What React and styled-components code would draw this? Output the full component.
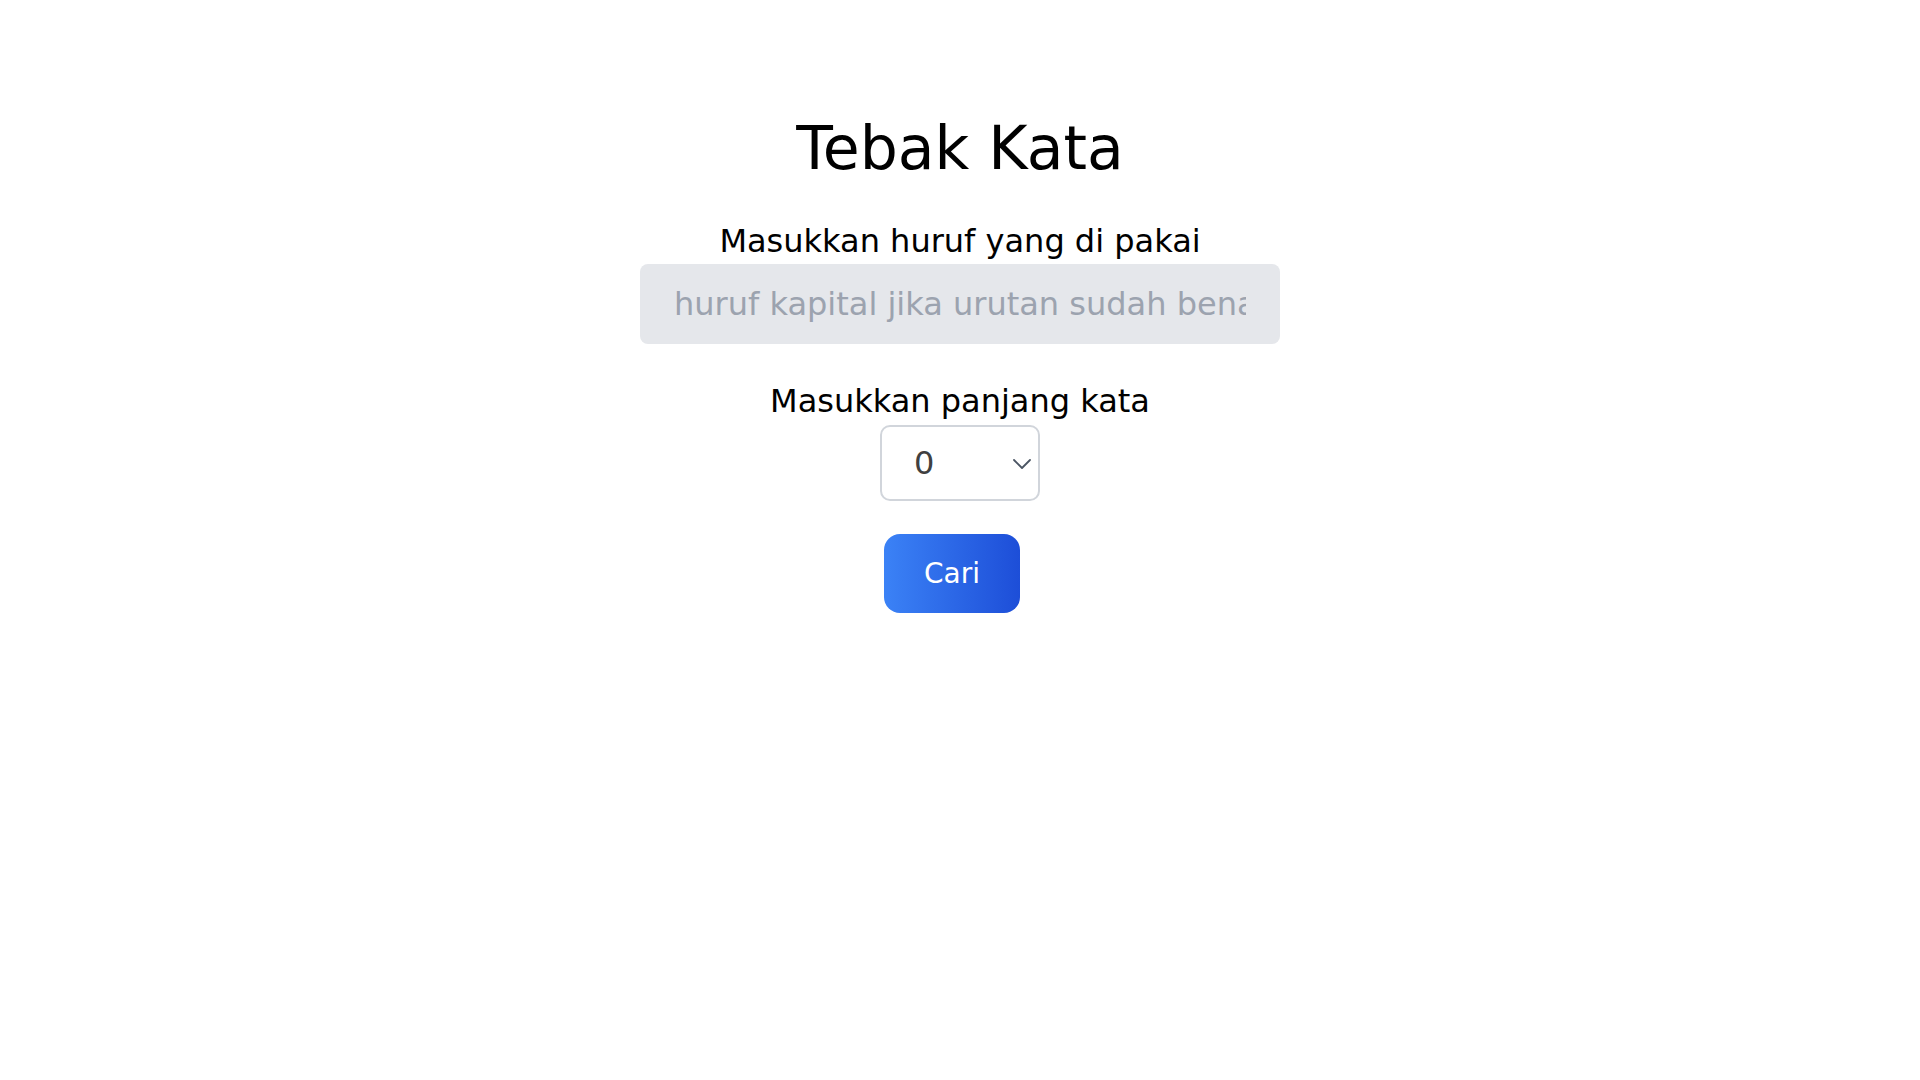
import styled, { createGlobalStyle } from 'styled-components';
import { useState } from 'react';

const GlobalStyle = createGlobalStyle`
  *, *::before, *::after {
    box-sizing: border-box;
  }

  body {
    margin: 0;
    background: #ffffff;
    color: #000000;
    font-family: 'DejaVu Sans', 'Noto Sans', sans-serif;
  }
`;

const Page = styled.main`
  min-height: 100vh;
  display: flex;
  flex-direction: column;
  align-items: center;
  padding-top: 113px;
`;

const Title = styled.h1`
  margin: 0 0 40px;
  font-size: 60px;
  font-weight: 400;
  line-height: 70px;
`;

const Form = styled.form`
  display: flex;
  flex-direction: column;
  align-items: center;
`;

const Field = styled.div`
  display: flex;
  flex-direction: column;
  align-items: center;
  gap: ${({ $gap }) => $gap || 4}px;
  margin-bottom: ${({ $after }) => $after || 0}px;
`;

const Label = styled.label`
  font-size: 32px;
  line-height: 37px;
  color: #000000;
`;

const TextInput = styled.input`
  width: 640px;
  height: 80px;
  padding: 0 34px;
  border: none;
  border-radius: 8px;
  background-color: #e5e7eb;
  font-family: inherit;
  font-size: 32px;
  color: #374151;
  outline: none;

  &::placeholder {
    color: #9ca3af;
  }
`;

const SelectWrap = styled.div`
  position: relative;
  width: 160px;
  height: 76px;
`;

const Select = styled.select`
  appearance: none;
  width: 100%;
  height: 100%;
  padding: 0 0 0 32px;
  border: 2px solid #d1d5db;
  border-radius: 10px;
  background-color: #ffffff;
  font-family: inherit;
  font-size: 32px;
  color: #404040;
  outline: none;
`;

const Chevron = styled.svg`
  position: absolute;
  right: 8px;
  top: 33px;
  pointer-events: none;
`;

const Button = styled.button`
  width: 136px;
  height: 79px;
  margin-right: 16px;
  border: none;
  border-radius: 16px;
  background: linear-gradient(to right, #3b82f6, #1d4ed8);
  color: #ffffff;
  font-family: inherit;
  font-size: 28px;
  cursor: pointer;
`;

const App = () => {
  const [letters, setLetters] = useState('');
  const [length, setLength] = useState('0');

  return (
    <>
      <GlobalStyle />
      <Page>
        <Title>Tebak Kata</Title>
        <Form onSubmit={(e) => e.preventDefault()}>
          <Field $after={39}>
            <Label htmlFor="huruf">Masukkan huruf yang di pakai</Label>
            <TextInput
              id="huruf"
              value={letters}
              onChange={(e) => setLetters(e.target.value)}
              placeholder="huruf kapital jika urutan sudah benar"
            />
          </Field>
          <Field $gap={5} $after={33}>
            <Label htmlFor="panjang">Masukkan panjang kata</Label>
            <SelectWrap>
              <Select
                id="panjang"
                value={length}
                onChange={(e) => setLength(e.target.value)}
              >
                {[0, 1, 2, 3, 4, 5, 6, 7, 8, 9, 10].map((n) => (
                  <option key={n} value={n}>
                    {n}
                  </option>
                ))}
              </Select>
              <Chevron width="20" height="12" viewBox="0 0 20 12">
                <polyline
                  points="2,2 10,10 18,2"
                  fill="none"
                  stroke="#4b5563"
                  strokeWidth="1.8"
                  strokeLinecap="round"
                  strokeLinejoin="round"
                />
              </Chevron>
            </SelectWrap>
          </Field>
          <Button type="submit">Cari</Button>
        </Form>
      </Page>
    </>
  );
};

export default App;
